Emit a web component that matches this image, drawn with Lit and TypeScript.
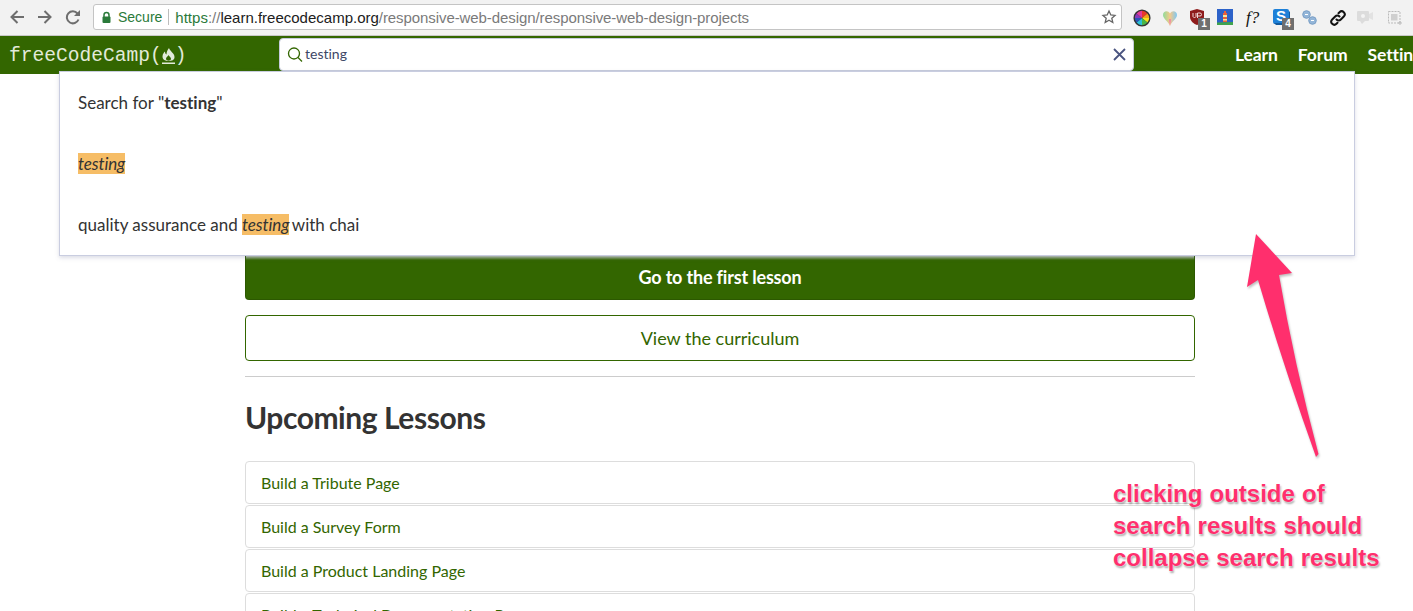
import { LitElement, html, css } from "lit";
import { customElement } from "lit/decorators.js";

const lessons = ["Build a Tribute Page", "Build a Survey Form", "Build a Product Landing Page", "Build a Technical Documentation Page"];

@customElement("app-root")
export class AppRoot extends LitElement {
  static styles = css`
    :host { display: block; width: 1413px; height: 611px; overflow: hidden; position: relative; background: #fff; font-family: Lato, "Open Sans", sans-serif; color: #333; font-variant-ligatures: none; }
    .chrome { height: 36px; box-sizing: border-box; background: #f2f2f2; border-bottom: 1px solid #c8c8c8; display: flex; align-items: center; padding: 0 0 1px 9px; }
    .nav { width: 16px; height: 16px; margin-right: 12px; flex: none; display: block; }
    .omni { width: 1029px; height: 26px; box-sizing: border-box; background: #fff; border: 1px solid #c4c4c4; border-radius: 3px; display: flex; align-items: center; font: 15px "Liberation Sans", Arial, sans-serif; padding-left: 7px; position: relative; flex: none; white-space: nowrap; }
    .secure { color: #2a7a3a; margin-left: 6px; font-size: 14px; }
    .sep { width: 1px; height: 16px; background: #bdbdbd; margin: 0 6px; }
    .https { color: #2a7a3a; }
    .grey { color: #7a7a7a; }
    .path { letter-spacing: -0.08px; }
    .host { color: #202020; }
    .star { position: absolute; right: 4px; top: 4px; }
    .exts { position: relative; flex: none; width: 291px; height: 30px; margin-left: -5px; }
    .ext { position: absolute; display: block; }
    .badge { position: absolute; width: 12px; height: 12px; background: #6f6f6f; color: #fff; font: bold 10px/12px "Liberation Sans", sans-serif; text-align: center; }
    .fq { position: absolute; left: 129px; top: 6px; font: italic 17px "Liberation Serif", serif; color: #111; }
    .s { position: absolute; left: 159px; top: 6px; color: #fff; font: bold 15px/16px "Liberation Sans", sans-serif; }
    .bar { height: 38px; background: #336600; position: relative; display: flex; align-items: flex-start; box-sizing: border-box; padding-left: 9px; }
    .logo { font: 19.6px/36px "Liberation Mono", monospace; color: #e2eada; display: flex; align-items: center; flex: none; width: 270px; padding-top: 2px; }
    .flame { flex: none; }
    .search { width: 855px; height: 33px; margin-top: 2px; flex: none; box-sizing: border-box; background: #fff; border-radius: 4px; border: 1px solid #c6cbdc; display: flex; align-items: center; padding: 0 0 2px 7px; position: relative; font-size: 14px; color: #3d4766; }
    .mag { margin-right: 2px; flex: none; }
    .close { position: absolute; right: 7px; top: 9px; }
    .links { display: flex; gap: 20px; margin-left: 101px; color: #fff; font-weight: 700; font-size: 17.5px; line-height: 37px; white-space: nowrap; letter-spacing: -0.1px; }
    .results { position: absolute; left: 59px; top: 71px; width: 1296px; height: 185px; box-sizing: border-box; background: #fff; border: 1px solid #c9cde0; box-shadow: 0 2px 4px rgba(120,125,160,.25); z-index: 3; padding-left: 18px; font-size: 17px; line-height: 21px; }
    .hit { height: 61px; display: flex; align-items: center; white-space: pre; }
    mark { background: #f6bd66; color: #333; font-style: italic; display: inline-block; letter-spacing: -0.1px; }
    .tight { margin-right: -1.5px; }
    main { width: 950px; position: absolute; top: 256px; left: 245px; }
    .btn { box-sizing: border-box; width: 950px; border-radius: 4px; display: flex; align-items: center; justify-content: center; font-size: 18px; }
    .primary { height: 44px; background: linear-gradient(#c4c9c0 0, #6f9050 2px, #336600 4px); color: #fff; font-weight: 700; border: 1px solid #2c5800; border-top: 0; border-radius: 0 0 4px 4px; letter-spacing: -0.18px; padding-bottom: 1px; }
    .secondary { height: 46px; margin-top: 15px; border: 1px solid #336600; color: #336600; background: #fff; }
    hr { border: 0; border-top: 1px solid #ccc; margin: 15px 0 0; }
    h2 { font-size: 30px; font-weight: 700; margin: 18px 0 22px; line-height: 44px; color: #333; letter-spacing: -0.45px; }
    .list { display: flex; flex-direction: column; }
    .item { height: 43px; box-sizing: border-box; border: 1px solid #ddd; border-radius: 4px; margin-bottom: 1px; display: flex; align-items: center; padding-left: 15px; color: #336600; font-size: 16px; background: #fff; }
    .arrow { position: absolute; left: 1240px; top: 230px; z-index: 5; filter: drop-shadow(1px 2px 1px rgba(0,0,0,.25)); }
    .note { position: absolute; left: 1113px; top: 478px; z-index: 6; font: bold 24px/32px "Liberation Sans", Arial, sans-serif; color: #ff2f6d; white-space: nowrap; word-spacing: 0.5px; text-shadow: 0 0 2px #fff, 1px 2px 2px rgba(0,0,0,.35), 0 0 1px #fff; }
  `;

  private extensions() {
    return html`
      <svg class="ext" style="left:16px;top:7px" width="18" height="18" viewBox="0 0 20 20">
        <circle cx="10" cy="10" r="9.500" fill="#333"/>
        <path d="M10 10L10 2A8 8 0 0 1 16 5Z" fill="#e8392b"/><path d="M10 10L16 5A8 8 0 0 1 18 10Z" fill="#f5a11c"/>
        <path d="M10 10L18 10A8 8 0 0 1 16 15Z" fill="#f7e21c"/><path d="M10 10L16 15A8 8 0 0 1 10 18Z" fill="#48b648"/>
        <path d="M10 10L10 18A8 8 0 0 1 4 15Z" fill="#2bc0d8"/><path d="M10 10L4 15A8 8 0 0 1 2 10Z" fill="#2c55b8"/>
        <path d="M10 10L2 10A8 8 0 0 1 4 5Z" fill="#8a3ab9"/><path d="M10 10L4 5A8 8 0 0 1 10 2Z" fill="#e23a9a"/>
      </svg>
      <svg class="ext" style="left:45px;top:8px" width="16" height="16" viewBox="0 0 16 16">
        <defs><linearGradient id="h" x1="0" x2="1" y1="0" y2="0"><stop offset="0" stop-color="#8fdc9a"/><stop offset=".5" stop-color="#f5c98a"/><stop offset="1" stop-color="#7cc8f5"/></linearGradient></defs>
        <path d="M8 16C7 12 1 9 1 5C1 1 6 0 8 3.500C10 0 15 1 15 5C15 9 9 12 8 16Z" fill="url(#h)"/>
        <path d="M8 16C7.500 13 7 11 7 9H9C9 11 8.500 13 8 16Z" fill="#f08aa8"/>
      </svg>
      <svg class="ext" style="left:73px;top:7px" width="14" height="16" viewBox="0 0 14 16">
        <path d="M7 0L14 2V8C14 12 10 15 7 16C4 15 0 12 0 8V2Z" fill="#8e1b1b"/>
        <path d="M3 4V7.500A1.600 1.600 0 0 0 6 7.500V4M7.500 9V4H10A1.500 1.500 0 0 1 10 7H7.500" fill="none" stroke="#f0d8d8" stroke-width="1"/>
      </svg>
      <span class="badge" style="left:81px;top:16px">1</span>
      <svg class="ext" style="left:100px;top:7px" width="16" height="16" viewBox="0 0 16 16">
        <rect width="16" height="16" fill="#2c62c9"/>
        <path d="M7 2H9V4H10V13H6V4H7Z" fill="#e8603a"/><rect x="6" y="6" width="4" height="2" fill="#f3e6a0"/><rect x="6" y="10" width="4" height="1.500" fill="#f3e6a0"/>
        <path d="M0 13.500L16 13V16H0Z" fill="#3fa34d"/>
      </svg>
      <span class="fq">f?</span>
      <svg class="ext" style="left:156px;top:7px" width="17" height="16" viewBox="0 0 17 16">
        <rect x="0" y="0" width="16" height="15" rx="2" fill="#1d80d8"/><path d="M1 14H16V2L17 3V14A2 2 0 0 1 15 16H3Z" fill="#125a9e"/>
      </svg>
      <span class="s">S</span>
      <span class="badge" style="left:165px;top:16px">4</span>
      <svg class="ext" style="left:185px;top:8px" width="15" height="15" viewBox="0 0 15 15">
        <circle cx="4.500" cy="4.500" r="3.800" fill="#93b5d8" stroke="#7a9fc6"/><circle cx="10.500" cy="10.500" r="3.800" fill="#93b5d8" stroke="#7a9fc6"/>
        <path d="M3 4.500H6M9 10.500H12" stroke="#fff" stroke-width="1.200"/>
      </svg>
      <svg class="ext" style="left:212px;top:7px" width="18" height="18" viewBox="0 0 18 18" fill="none" stroke="#111" stroke-width="2" stroke-linecap="round">
        <path d="M7.500 10.500a3 3 0 0 0 4.300 0l3-3a3 3 0 0 0-4.300-4.300l-1 1"/><path d="M10.500 7.500a3 3 0 0 0-4.300 0l-3 3a3 3 0 0 0 4.300 4.300l1-1"/>
      </svg>
      <svg class="ext" style="left:240px;top:9px" width="16" height="14" viewBox="0 0 16 14">
        <rect x="0" y="0" width="12" height="10" rx="1" fill="#dcdcdc"/><path d="M12 3L16 1V9L12 7Z" fill="#e2e2e2"/><path d="M3 10h5l-3 3z" fill="#dcdcdc"/><circle cx="6" cy="5" r="2" fill="#f4f4f4"/>
      </svg>
      <svg class="ext" style="left:270px;top:8px" width="16" height="16" viewBox="0 0 16 16" fill="none">
        <rect x="1.500" y="1.500" width="11.500" height="11.500" stroke="#bbb" stroke-dasharray="2 1"/><rect x="4" y="4" width="6.500" height="6.500" fill="#cfcfcf"/><path d="M13 11v4M11 13h4" stroke="#bbb"/>
      </svg>
    `;
  }

  render() {
    return html`
      <div class="chrome">
        <svg class="nav" viewBox="0 0 16 16" fill="none" stroke="#6e6e6e" stroke-width="2"><path d="M15 8H2.500M8.500 2L2.500 8l6 6"/></svg>
        <svg class="nav" viewBox="0 0 16 16" fill="none" stroke="#6e6e6e" stroke-width="2"><path d="M1 8h12.500M7.500 2l6 6-6 6"/></svg>
        <svg class="nav" viewBox="0 0 16 16" fill="none" stroke="#6e6e6e" stroke-width="2"><path d="M13.500 10.500A6 6 0 1 1 12.500 4.500"/><path d="M15 1V7H9Z" fill="#6e6e6e" stroke="none"/></svg>
        <div class="omni">
          <svg width="11" height="13" viewBox="0 0 11 13"><path d="M3 6V4a2.500 2.500 0 0 1 5 0v2" fill="none" stroke="#2a7a3a" stroke-width="1.500"/><rect x="1.500" y="5.500" width="8" height="6.500" rx="1" fill="#2a7a3a"/></svg>
          <span class="secure">Secure</span><span class="sep"></span>
          <span class="https">https</span><span class="grey">://</span><span class="host">learn.freecodecamp.org</span><span class="grey path">/responsive-web-design/responsive-web-design-projects</span>
          <svg class="star" width="16" height="16" viewBox="0 0 16 16" fill="none" stroke="#666" stroke-width="1.300"><path d="M8 2l1.800 4 4.200.4-3.200 2.800 1 4.300L8 11.300 4.200 13.500l1-4.300L2 6.400 6.200 6z"/></svg>
        </div>
        <div class="exts">${this.extensions()}</div>
      </div>
      <div class="bar">
        <div class="logo">freeCodeCamp(<svg class="flame" width="13" height="24" viewBox="0 0 13 24">
            <path d="M7 4C7.500 7 12.500 9 12.500 13C12.500 16 10 17 6.500 17C3 17 .5 15.500 .5 12.500C.5 10 2 8.500 3 7.500C3 9 3.500 10 4.500 10.500C4.500 8 5.500 6 7 4Z" fill="#e2eada"/>
            <path d="M6.500 11C7 12.500 9 13 9 14.800C9 16 8 16.800 6.500 16.800C5 16.800 4 16 4 14.800C4 13 6 12.500 6.500 11Z" fill="#336600"/>
            <rect x="0" y="18.500" width="13" height="1.500" fill="#e2eada"/>
          </svg>)</div>
        <div class="search">
          <svg class="mag" width="16" height="16" viewBox="0 0 16 16" fill="none" stroke="#336600" stroke-width="1.300"><circle cx="7" cy="7.500" r="5.500"/><path d="M11 11.500L15 15.500"/></svg>
          testing
          <svg class="close" width="13" height="13" viewBox="0 0 13 13" stroke="#4a5480" stroke-width="1.800"><path d="M1 1l11 11M12 1L1 12"/></svg>
        </div>
        <div class="links"><span>Learn</span><span>Forum</span><span>Settings</span></div>
      </div>
      <div class="results">
        <div class="hit"><span>Search for "<b>testing</b>"</span></div>
        <div class="hit"><mark>testing</mark></div>
        <div class="hit"><span>quality assurance and <mark class="tight">testing</mark> with chai</span></div>
      </div>
      <main>
        <div class="btn primary">Go to the first lesson</div>
        <div class="btn secondary">View the curriculum</div>
        <hr />
        <h2>Upcoming Lessons</h2>
        <div class="list">${lessons.map((l) => html`<div class="item">${l}</div>`)}</div>
      </main>
      <svg class="arrow" width="100" height="240" viewBox="0 0 100 240">
        <path d="M16 4L52 43 39 45Q54 133 78.500 224L76 227Q44 138 18 50L7 57Z" fill="#ff2f6d"/>
      </svg>
      <div class="note">clicking outside of<br />search results should<br />collapse search results</div>
    `;
  }
}
